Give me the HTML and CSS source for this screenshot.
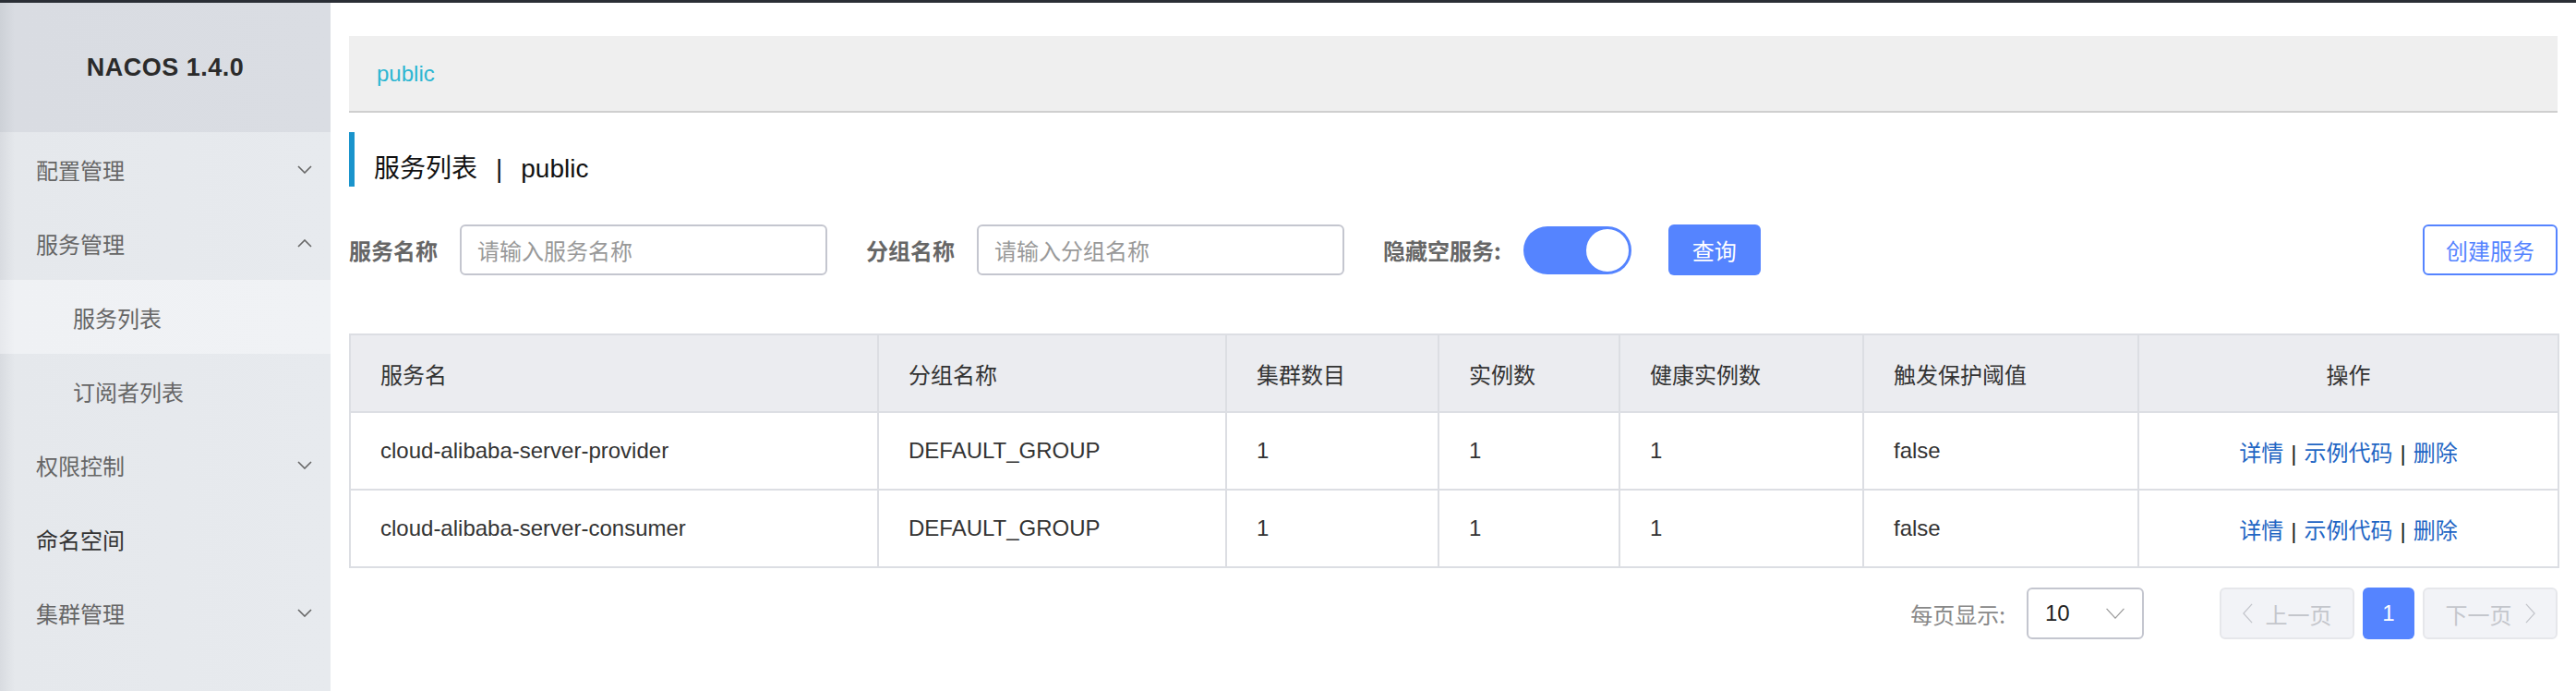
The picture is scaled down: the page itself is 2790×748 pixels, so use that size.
FILE: index.html
```html
<!DOCTYPE html>
<html lang="zh-CN">
<head>
<meta charset="utf-8">
<title>Nacos</title>
<link rel="stylesheet" href="styles.css">
</head>
<body>
<div class="topbar"></div>
<div class="app">
  <aside class="sidebar">
    <div class="brand">NACOS 1.4.0</div>
    <ul class="menu">
      <li class="menu-item"><span>配置管理</span><svg class="chev" viewBox="0 0 16 9"><path d="M1 1 L8 8 L15 1" /></svg></li>
      <li class="menu-item"><span>服务管理</span><svg class="chev" viewBox="0 0 16 9"><path d="M1 8 L8 1 L15 8" /></svg></li>
      <li class="menu-item sub active"><span>服务列表</span></li>
      <li class="menu-item sub"><span>订阅者列表</span></li>
      <li class="menu-item"><span>权限控制</span><svg class="chev" viewBox="0 0 16 9"><path d="M1 1 L8 8 L15 1" /></svg></li>
      <li class="menu-item dark"><span>命名空间</span></li>
      <li class="menu-item"><span>集群管理</span><svg class="chev" viewBox="0 0 16 9"><path d="M1 1 L8 8 L15 1" /></svg></li>
    </ul>
  </aside>
  <main class="main">
    <div class="ns-bar"><span class="ns-link">public</span></div>
    <div class="page-title">服务列表<span class="title-sep">|</span>public</div>
    <div class="search">
      <label class="field-label">服务名称</label>
      <div class="input"><span class="placeholder">请输入服务名称</span></div>
      <label class="field-label gap-l">分组名称</label>
      <div class="input"><span class="placeholder">请输入分组名称</span></div>
      <label class="field-label gap-l">隐藏空服务:</label>
      <div class="switch"><div class="knob"></div></div>
      <button class="btn-primary">查询</button>
      <button class="btn-outline">创建服务</button>
    </div>
    <table class="table">
      <colgroup>
        <col class="c1"><col class="c2"><col class="c3"><col class="c4"><col class="c5"><col class="c6"><col class="c7">
      </colgroup>
      <thead>
        <tr><th>服务名</th><th>分组名称</th><th>集群数目</th><th>实例数</th><th>健康实例数</th><th>触发保护阈值</th><th class="center">操作</th></tr>
      </thead>
      <tbody>
        <tr>
          <td>cloud-alibaba-server-provider</td><td>DEFAULT_GROUP</td><td>1</td><td>1</td><td>1</td><td>false</td>
          <td class="center"><a class="link">详情</a><span class="sep">|</span><a class="link">示例代码</a><span class="sep">|</span><a class="link">删除</a></td>
        </tr>
        <tr>
          <td>cloud-alibaba-server-consumer</td><td>DEFAULT_GROUP</td><td>1</td><td>1</td><td>1</td><td>false</td>
          <td class="center"><a class="link">详情</a><span class="sep">|</span><a class="link">示例代码</a><span class="sep">|</span><a class="link">删除</a></td>
        </tr>
      </tbody>
    </table>
    <div class="pager">
      <span class="per-page">每页显示:</span>
      <div class="select"><span>10</span><svg class="sel-chev" viewBox="0 0 24 14"><path d="M1 1 L12 13 L23 1" /></svg></div>
      <div class="pages">
        <div class="pg-btn disabled"><svg class="pg-arrow" viewBox="0 0 12 24"><path d="M11 1 L1 12 L11 23" /></svg><span>上一页</span></div>
        <div class="pg-num">1</div>
        <div class="pg-btn disabled"><span>下一页</span><svg class="pg-arrow" viewBox="0 0 12 24"><path d="M1 1 L11 12 L1 23" /></svg></div>
      </div>
    </div>
  </main>
</div>
</body>
</html>
```

FILE: styles.css
```css
* { box-sizing: border-box; }
html, body { margin: 0; padding: 0; }
body {
  width: 2790px;
  height: 748px;
  overflow: hidden;
  background: #fff;
  font-family: "Liberation Sans", "Noto Sans CJK SC", sans-serif;
  color: #333;
}
.topbar { height: 3px; background: #2a2e35; }
.app { display: flex; height: 745px; }

/* sidebar */
.sidebar {
  width: 358px;
  flex: none;
  background: linear-gradient(to right, #d8dbe0 0, #e5e8ec 16px, #e7eaee 100%);
}
.brand {
  height: 140px;
  display: flex;
  align-items: center;
  justify-content: center;
  font-size: 27px;
  font-weight: bold;
  letter-spacing: 0.5px;
  color: #2b2b2b;
  background: linear-gradient(to right, #cdd1d7 0, #d9dce2 16px, #dadde3 100%);
}
.menu { list-style: none; margin: 0; padding: 0; }
.menu-item {
  height: 80px;
  display: flex;
  align-items: center;
  justify-content: space-between;
  padding: 0 20px 0 39px;
  font-size: 24px;
  color: #666;
  font-family: "Noto Sans CJK SC", sans-serif;
}
.menu-item.sub { padding-left: 79px; }
.menu-item.active { background: linear-gradient(to right, #e6e8ec 0, #eff1f4 16px, #f0f2f5 100%); }
.menu-item.dark { color: #333; }
.chev { width: 16px; height: 9px; fill: none; stroke: #666; stroke-width: 1.6; }

/* main */
.main {
  flex: 1;
  padding: 36px 20px 0 20px;
  min-width: 0;
}
.ns-bar {
  height: 83px;
  background: #efefef;
  border-bottom: 2px solid #cfcfcf;
  display: flex;
  align-items: center;
  padding-left: 30px;
}
.ns-link { color: #2cb6d2; font-size: 24px; }
.page-title {
  margin-top: 21px;
  height: 59px;
  border-left: 6px solid #1a94cc;
  padding: 20px 0 0 21px;
  line-height: 39px;
  font-size: 28px;
  color: #111;
}
.title-sep { margin: 0 20px; }

.search {
  margin-top: 41px;
  height: 55px;
  display: flex;
  align-items: center;
}
.field-label {
  font-size: 24px;
  font-weight: bold;
  color: #666;
  font-family: "Noto Sans CJK SC", sans-serif;
  margin-right: 24px;
}
.field-label.gap-l { margin-left: 42px; }
.input {
  width: 398px;
  height: 55px;
  border: 2px solid #c4c6cf;
  border-radius: 6px;
  display: flex;
  align-items: center;
  padding-left: 17px;
}
.placeholder { font-size: 24px; color: #999; font-family: "Noto Sans CJK SC", sans-serif; }
.switch {
  width: 117px;
  height: 52px;
  border-radius: 26px;
  background: #5584ff;
  display: flex;
  align-items: center;
  justify-content: flex-end;
  padding-right: 1px;
}
.knob {
  width: 50px;
  height: 50px;
  border-radius: 50%;
  background: #fff;
  border: 2px solid #5584ff;
}
.btn-primary {
  margin-left: 40px;
  width: 100px;
  height: 55px;
  border: none;
  border-radius: 6px;
  background: #5584ff;
  color: #fff;
  font-size: 24px;
  font-family: "Noto Sans CJK SC", sans-serif;
  padding: 0;
}
.btn-outline {
  margin-left: auto;
  width: 146px;
  height: 55px;
  border: 2px solid #5584ff;
  border-radius: 6px;
  background: #fff;
  color: #5584ff;
  font-size: 24px;
  font-family: "Noto Sans CJK SC", sans-serif;
  padding: 0;
}

/* table */
.table {
  margin-top: 63px;
  width: 100%;
  border-collapse: collapse;
  table-layout: fixed;
  border: 2px solid #dcdee3;
  font-size: 24px;
}
.c1 { width: 572px; } .c2 { width: 377px; } .c3 { width: 230px; } .c4 { width: 196px; }
.c5 { width: 264px; } .c6 { width: 298px; } .c7 { width: 455px; }
.table th, .table td {
  height: 84px;
  padding: 0 32px;
  border: 2px solid #dcdee3;
  text-align: left;
  font-weight: normal;
  color: #333;
  white-space: nowrap;
}
.table th { background: #ebecf0; }
.table .center { text-align: center; }
.link { color: #1f66c4; }
.sep { color: #222; margin: 0 8px; }

/* pager */
.pager {
  margin-top: 21px;
  display: flex;
  align-items: center;
  justify-content: flex-end;
  height: 56px;
}
.per-page { font-size: 24px; color: #888; margin-right: 23px; font-family: "Noto Sans CJK SC", sans-serif; }
.select {
  width: 127px;
  height: 56px;
  border: 2px solid #c4c6cf;
  border-radius: 6px;
  display: flex;
  align-items: center;
  justify-content: space-between;
  padding: 0 18px 0 18px;
  font-size: 24px;
  color: #222;
}
.sel-chev { width: 22px; height: 12px; fill: none; stroke: #999; stroke-width: 1.4; }
.pages { display: flex; align-items: center; gap: 9px; margin-left: 82px; }
.pg-btn {
  width: 146px;
  height: 56px;
  border: 2px solid #e6e7eb;
  border-radius: 6px;
  background: #f2f3f7;
  color: #c4c6cc;
  display: flex;
  align-items: center;
  justify-content: center;
  gap: 14px;
  font-size: 24px;
  font-family: "Noto Sans CJK SC", sans-serif;
}
.pg-arrow { width: 11px; height: 22px; fill: none; stroke: #c4c6cc; stroke-width: 1.4; }
.pg-num {
  width: 56px;
  height: 56px;
  border-radius: 6px;
  background: #5584ff;
  color: #fff;
  font-size: 24px;
  display: flex;
  align-items: center;
  justify-content: center;
}
```
